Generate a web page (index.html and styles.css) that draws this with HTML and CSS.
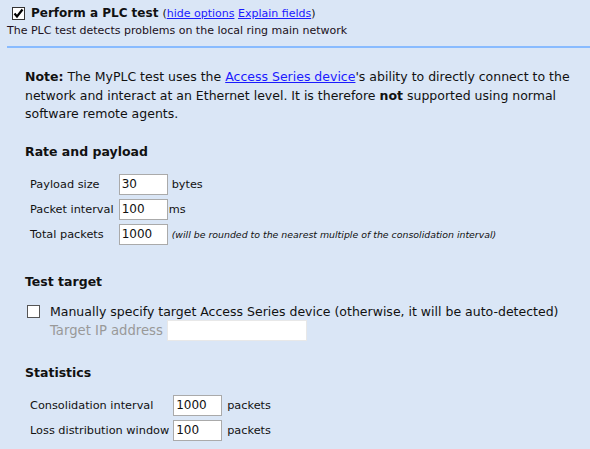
FILE: index.html
```html
<!DOCTYPE html>
<html>
<head>
<meta charset="utf-8">
<link rel="stylesheet" href="styles.css">
</head>
<body>
<div class="test-head">
  <div class="title-row">
    <span class="box checked"><svg viewBox="0 0 13 13" width="13" height="13"><path d="M2.5 6.5 L5 9.5 L10.5 2.5" fill="none" stroke="#000" stroke-width="2.2"/></svg></span>
    <span class="title">Perform a PLC test</span>
    <span class="opts">(<a href="#">hide options</a> <a href="#">Explain fields</a>)</span>
  </div>
  <div class="subtitle">The PLC test detects problems on the local ring main network</div>
</div>
<div class="test-body">
  <p class="note"><b>Note:</b> The MyPLC test uses the <a href="#">Access Series device</a>'s ability to directly connect to the<br>network and interact at an Ethernet level. It is therefore <b>not</b> supported using normal<br>software remote agents.</p>

  <h3 class="section">Rate and payload</h3>
  <table class="fields rate">
    <tr><td>Payload size</td><td><input class="num" value="30"></td><td class="unit">bytes</td></tr>
    <tr><td>Packet interval</td><td><input class="num" value="100"></td><td class="unit tight">ms</td></tr>
    <tr><td>Total packets</td><td><input class="num" value="1000"></td><td class="unit"><i class="hint">(will be rounded to the nearest multiple of the consolidation interval)</i></td></tr>
  </table>

  <h3 class="section target-head">Test target</h3>
  <div class="target">
    <div class="target-row"><span class="box"></span><span>Manually specify target Access Series device (otherwise, it will be auto-detected)</span></div>
    <div class="ip-row"><span class="muted">Target IP address</span><input class="ip" disabled></div>
  </div>

  <h3 class="section stats-head">Statistics</h3>
  <table class="fields stats">
    <tr><td>Consolidation interval</td><td><input class="num" value="1000"></td><td class="unit">packets</td></tr>
    <tr><td>Loss distribution window</td><td><input class="num" value="100"></td><td class="unit">packets</td></tr>
  </table>
</div>
</body>
</html>
```
FILE: styles.css
```css
html, body {
  margin: 0;
  background: #dae6f6;
}
body {
  font-family: "DejaVu Sans", Verdana, sans-serif;
  font-size: 12px;
  color: #111;
}
a { color: #1a1aff; }

/* header: checkbox, title, links and description */
.test-head {
  padding: 5px 0 0 7px;
}
.title-row {
  display: flex;
  align-items: center;
  gap: 6px;
  padding-left: 5px;
  height: 16px;
}
.box {
  display: inline-block;
  width: 11px;
  height: 11px;
  border: 1px solid #555;
  background: #fff;
  flex: none;
  position: relative;
}
.box.checked { border-color: #333; }
.box svg { position: absolute; left: -1px; top: -1px; }
.title {
  font-weight: bold;
  font-size: 12px;
}
.opts {
  font-size: 11px;
  margin-left: -2px;
}
.subtitle {
  font-size: 11px;
  margin-top: 3px;
  color: #201020;
}

/* option panel under the divider */
.test-body {
  border-top: 2px solid #88bbff;
  margin: 9px 0 0 7px;
  padding: 20px 0 0 18px;
}
.note {
  margin: 0;
  font-size: 12.5px;
  line-height: 18.5px;
  white-space: nowrap;
}
.section {
  font-size: 12.5px;
  margin: 20px 0 15px;
}
.section.target-head { margin-top: 25px; }
.section.stats-head { margin-top: 24px; }
.fields {
  border-spacing: 0 4px;
  margin: -4px 0 0 5px;
  font-size: 11.3px;
}
.fields td { padding: 0; }
.rate td:first-child { padding-right: 5px; }
.stats td:first-child { padding-right: 4px; }
.fields td.unit { padding-left: 4px; }
.stats td.unit { padding-left: 5px; }
.fields td.unit.tight { padding-left: 1px; }
.num {
  width: 49px;
  height: 21px;
  box-sizing: border-box;
  border: 1px solid #aaa;
  background: #fff;
  font: 12px "DejaVu Sans", sans-serif;
  padding: 1px 2px;
  color: #111;
}
.hint {
  font-size: 9.4px;
}
.target { padding-left: 2px; font-size: 12.5px; }
.target-row {
  display: flex;
  align-items: center;
  gap: 10px;
}
.ip-row {
  display: flex;
  align-items: center;
  gap: 4px;
  padding-left: 23px;
  margin-top: 1px;
}
.muted { color: #999; font-size: 13.2px; }
.ip {
  width: 140px;
  height: 21px;
  box-sizing: border-box;
  border: 1px solid #e8e8e8;
  background: #fff;
  flex: none;
}
```
